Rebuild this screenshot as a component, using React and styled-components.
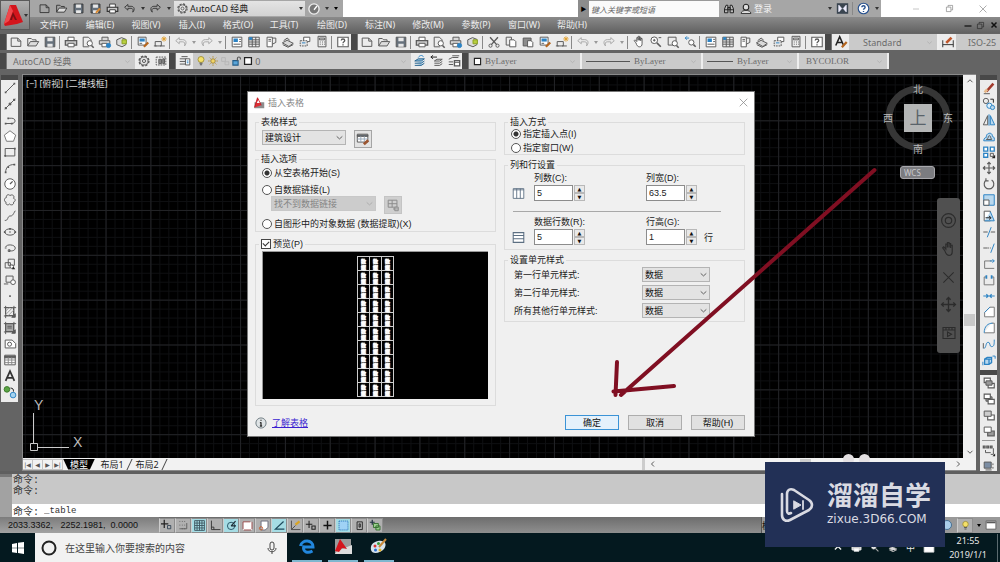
import React from 'react'
import styled, { createGlobalStyle } from 'styled-components';

const GlobalStyle = createGlobalStyle`
 * {
  box-sizing: border-box;
 }
 body {
  margin: 0;
  overflow: hidden;
  background: #646464;
  font-family: "Noto Sans", "Noto Sans CJK SC", sans-serif;
  font-size: 9px;
 }
 button, input, select {
  font: inherit;
  color: inherit;
  margin: 0;
  padding: 0;
  border: none;
  border-radius: 0;
  background: none;
 }
`;

/* ---------- icons ---------- */

const D = '#5a5a5a';
const B = '#2c83c4';
const LB = '#b9d8ee';

const glyphs = {
  new: <path d="M2.5 3.500h7.500l3.500 3.500v6h-11zM10 3.500v3.500h3.500" />,
  open: <><path d="M2 12.500V4h4l1.500 1.500h4V7" /><path d="M2 12.500 5 7.500h9.500L11.500 12.500z" fill="#ddd" /></>,
  save: <><path d="M2.500 2.500h11v11h-11z" fill="#66717c" /><path d="M5 3h6v4H5zM5 10h6v3.500H5z" fill="#e8e8e8" stroke="none" /></>,
  saveas: <><path d="M2.500 2.500h11v11h-11z" fill="#66717c" /><path d="M5 3h6v4H5zM5 10h6v3.500H5z" fill="#e8e8e8" stroke="none" /><path d="M8.500 13.500 13.500 8" stroke="#d98b33" strokeWidth="2.400" /></>,
  print: <><path d="M4.500 6V2.500h7V6" fill="#fff" /><path d="M1.500 6.500h13v5h-13z" fill="#c9c9c9" strokeWidth="1.400" /><path d="M4.500 9.500h7v4h-7z" fill="#fff" /></>,
  preview: <><path d="M9 13.500H2.500v-11h6l3 3V7" /><circle cx="10" cy="9.500" r="3" fill="#fff" /><path d="m12 12 2.500 2.500" strokeWidth="1.800" /></>,
  publish: <><path d="M4.500 6V2.500h7V6M1.500 6.500h12v4h-12z" fill="#d8d8d8" /><path d="M4.500 9.500h6v4h-6z" fill="#fff" /><circle cx="12" cy="12" r="2.400" fill={B} stroke={B} /></>,
  box3d: <><path d="M2 5.500 7.500 3l5 2v6L8 13.500 2 11z" fill="#dcdcdc" /><path d="M8 5.500h5v4.500H8z" fill="#b8cf3e" stroke="#8aa022" /></>,
  match: <><path d="M2.500 2.500h9v9h-9z" fill="#fff" /><path d="M4 4h6v3.500H4z" fill={B} stroke="none" /><path d="M9 13.500 14 8.500" stroke="#b5651d" strokeWidth="2.600" /><path d="M4 9.500h3" /></>,
  blockedit: <><path d="M2.500 7.500h7v5h-7zM1 12.500h3M8 12.500h5.500" /><path d="M12.500 1.500v6M9.500 4.500h6M10.500 2.500l4 4M14.500 2.500l-4 4" stroke="#e0a030" /></>,
  undo: <path d="M6 3 2 6.500 6 10V7.800h4c2 0 3 1.500 2 4.700 3-3 2-7.200-2-7.200H6z" />,
  redo: <path d="m10 3 4 3.500-4 3.500V7.800H6c-2 0-3 1.500-2 4.700C1 9.500 2 5.300 6 5.300h4z" />,
  cut: <><path d="M3.500 2.500 11 11M12.500 2.500 5 11" strokeWidth="1.600" /><circle cx="4" cy="12.200" r="1.800" /><circle cx="12" cy="12.200" r="1.800" /></>,
  copy: <><path d="M2.500 2.500h6v9h-6z" /><path d="M6.500 5.500h5l2 2v6h-7z" fill="#fff" /></>,
  paste: <><path d="M2.500 3.500h9v9h-9z" fill="#8c8c8c" /><path d="M7.500 6.500h4l2 2v5h-6z" fill="#fff" /></>,
  hand: <path d="M4.500 9 2.500 6.500l1-1 2 2V3h1.500v3-4.500h1.500V6 2.500H10V6.500 4h1.500v6c0 2-1 3.500-3 3.500s-3-1.500-4-4.500z" fill="#fff" />,
  handdark: <path d="M4.500 9 2.500 6.500l1-1 2 2V3h1.500v3-4.500h1.500V6 2.500H10V6.500 4h1.500v6c0 2-1 3.500-3 3.500s-3-1.500-4-4.500z" />,
  zoomrt: <><circle cx="6" cy="6" r="3.800" fill="#fff" /><path d="m9 9 4.500 4.500" strokeWidth="1.800" /><path d="M4.500 6h3M6 4.500v3M11 3h3" /></>,
  zoomwin: <><path d="M2.500 2.500h9v9h-9z" /><circle cx="10" cy="9.500" r="3" fill="#fff" /><path d="m12 12 2.500 2.500" strokeWidth="1.800" /></>,
  zoomprev: <><circle cx="9.500" cy="8.500" r="3" fill="#fff" /><path d="m12 11 2.500 2.500" strokeWidth="1.800" /><path d="M7 3.500H2.500m2-2-2 2 2 2" stroke={B} /></>,
  props: <><path d="M2.500 2.500h11v11h-11z" fill="#fff" /><path d="M4 4h5v4H4z" fill={B} stroke="none" /><path d="M10.500 5h2M4 10.500h8M10.500 7.500h2" /></>,
  design: <><path d="M2 2.500h12v11H2z" fill="#eee" /><path d="M2 5.500h12M2 8h12M2 10.500h12M6 2.500v11M10 2.500v11" /><path d="M3 3h2.500v2H3z" fill={B} stroke={B} /></>,
  palette: <><path d="M3.500 2.500h6v11h-6z" fill="#fff" /><path d="M5 5h3M5 7h3M9.500 3.500h4v5l-4 2" /></>,
  sheets: <path d="M1.500 9 7 6l7 3.500-5 3.500zM3 6.500 7 3.500 10 6M2 11l6 3 6-3" fill="#d8d8d8" />,
  markup: <><path d="M6.500 2.500h7v5h-7z" fill="#fff" /><path d="M2.500 6.500h8v6h-8z" fill="#e6e6e6" strokeDasharray="2 1" /><path d="M4.500 9h4" stroke={B} /></>,
  calc: <><path d="M3.500 1.500h9v12h-9z" fill="#eee" /><path d="M5 3.500h6v2H5z" /><path d="M5.500 8h1M8 8h1M10.500 8h1M5.500 10.500h1M8 10.500h1M10.500 10.500h1" /></>,
  help: <><path d="M2 2.500h12v11H2z" fill="#fff" strokeWidth="1.200" /><path d="M6 6.300c0-2.300 4-2.300 4 0 0 1.500-2 1.400-2 3M8 10.500v1.400" strokeWidth="1.500" /></>,
  gear: <><circle cx="8" cy="8" r="5.600" strokeWidth="1.600" strokeDasharray="2.600 1.800" /><circle cx="8" cy="8" r="4.600" fill="#e4e4e4" /><circle cx="8" cy="8" r="1.800" /></>,
  wsave: <><path d="M2.500 3.500h11v9h-11z" strokeDasharray="2 1" /><path d="M5.500 6h3v5h-3zM10 5.500h2v5.500h-2z" fill="#888" /></>,
  layers: <><path d="M2 5.500h8M2 8.500h8M2 11.500h8M4 3h7" stroke={D} /><path d="M8.500 5.500h5v7h-5z" fill="#fff" /><path d="M10 8h2M10 10h2" stroke={B} /></>,
  bulb: <><circle cx="8" cy="6" r="4" fill="#f4e06a" stroke="#9a8a30" /><path d="M6 11h4M6.500 13h3" strokeWidth="1.600" /></>,
  sun: <><circle cx="8" cy="8" r="3" fill="#f0d468" stroke="#9a7d2c" /><path d="M8 1.500v2M8 12.500v2M1.500 8h2M12.500 8h2M3.500 3.500l1.300 1.300M11.200 11.200l1.300 1.300M12.500 3.500l-1.300 1.300M3.500 12.500l1.300-1.300" stroke="#b08a2c" /></>,
  freeze: <path d="M3.500 3.500h5v5h-5zM8 9h5v4H8z" stroke="#b4b4b4" />,
  lock: <><path d="M2.500 7.500h7v6h-7z" fill="#5aa5d8" stroke="#235c88" strokeWidth="1.400" /><path d="M8.500 7.500v-3c0-2.500 4-2.500 4 0V6" strokeWidth="1.500" /></>,
  square: <path d="M2.500 2.500h11v11h-11z" fill="#fff" strokeWidth="2" />,
  layerset: <><path d="m2 8 4-2.500h7L9.500 8zM2 10.500 9.500 10.500 13 8M2 13h7.500L13 10.500" fill="#8fc0e2" stroke="#29648f" /><path d="M6 4c2-3 5-3 6-.500" stroke={B} /></>,
  layerprev: <><path d="m5 8 3-2h6l-3 2zM5 10.500h6l3-2M5 13h6l3-2" /><path d="M1 3.500h7M3.500 1.500l-2.500 2 2.500 2" stroke="#222" /></>,
  layerstate: <><path d="m2 6 4-2h7M2 9h5M2 12h5M6 2h8" /><path d="M8.500 7.500h6v6h-6z" fill="#fff" strokeWidth="1.500" /><path d="M9 9.500h5" /></>,
  textstyle: <><path d="M2 12 6.500 2 11 12M4 8.500h5" stroke="#222" strokeWidth="1.800" /><path d="m9 14 5.500-6" stroke="#b5651d" strokeWidth="2.600" /></>,
  dimstyle: <><path d="M2 6v8M14 6v8M2 11h12" stroke="#333" /><path d="m6 9 6-6" stroke="#c0562a" strokeWidth="3" /></>,
  line: <><path d="M3 13 13 3" /><path d="M2 12h2v2H2zM12 2h2v2h-2z" fill={D} stroke="none" /></>,
  xline: <><path d="M2 14 14 2" /><path d="M7 7h2v2H7zM2.500 12h1.500v1.500H2.500zM12 2.500h1.500V4H12z" fill={D} /></>,
  pline: <><path d="M3 12h7c5 0 5-6 0-6H7" /><path d="M2 11h2v2H2zM9 11h2v2H9zM5 5h2v2H5z" fill={D} stroke="none" /></>,
  polygon: <path d="m8 2 6.500 5-2.500 7H4L1.500 7z" fill="#fff" stroke="#777" />,
  rect: <><path d="M2.500 4h11v8.500h-11z" fill="#eee" /><path d="M1.500 11.500h2v2h-2zM12.500 3h2v2h-2z" fill={D} stroke="none" /></>,
  arc: <><path d="M3 13C3 7 7 4 13 4" /><path d="M2 12h2v2H2zM5 6h2v2H5zM12 3h2v2h-2z" fill={D} stroke="none" /></>,
  circle: <><circle cx="8" cy="8" r="6" fill="#fff" /><path d="m8 8 3-3" strokeWidth="1.500" /></>,
  wheel: <><circle cx="8" cy="8" r="6.500" /><circle cx="8" cy="8" r="3" /></>,
  cloud: <path d="M4 5c-1-3 3-4 4-2 2-2 6 0 4 3 3 1 2 4 0 4.500 1 3-3 4-4.500 2-1.500 2-5 1-4-2-3-1-2-5 .500-5.500z" />,
  spline: <path d="M2 13C6 14 5 8 8 8s3-1 6-6" />,
  ellipse: <><ellipse cx="8" cy="8" rx="6" ry="3.600" /><path d="M1 7h2v2H1zM13 7h2v2h-2zM7 3.500h2v2H7zM7 7.300h2v1.400H7z" fill={D} stroke="none" /></>,
  earc: <path d="M3 7c1-4 11-3 11 1 0 3-4 4-7 3M2 8h2M6 10h2v2H6z" />,
  insert: <><path d="M6 2.500h7v7H6zM2.500 6.500h6v6h-6z" fill="#eee" /><circle cx="10" cy="11" r="2" fill="#fff" /><path d="m12 11 2 3h-4z" fill="#222" stroke="none" /></>,
  block: <><path d="M3.500 3.500h8v7h-8z" /><circle cx="11.500" cy="10.500" r="2.700" fill="#fff" /><path d="M1 12.500h5" /></>,
  point: <path d="M7 7h2v2H7z" fill="#666" stroke="none" />,
  hatch: <><path d="M3 3h9v9H3zM1 3h14M1 12.500h12M3 1v14M12.500 1v10" /><path d="m3 7 4-4M3 11l8-8M6 12l6-6" stroke="#999" /><path d="m10 14 4-4v4z" fill={D} /></>,
  gradient: <><path d="M3 3h9v9H3z" fill="#aaa" /><path d="M1 3h14M1 12.500h12M3 1v14M12.500 1v10M5 6h5M5 8h5" /><path d="m10 14 4-4v4z" fill={D} /></>,
  region: <><path d="M2.500 3.500h8l4 4v5h-12z" fill="#fff" /><circle cx="7.500" cy="8.200" r="2.300" /></>,
  film: <path d="M2 2.500h12v11H2zM2 5h12M5 2.500V5M8 2.500V5M11 2.500V5M6.500 7l4 2.300-4 2.300z" />,
  table: <><path d="M2 2.500h12v11H2z" fill="#fff" /><path d="M2 3.500h12v2H2z" fill={D} /><path d="M2 8h12M2 11h12M6 5v8.500M10 5v8.500" stroke="#888" /></>,
  mtext: <path d="M3 13.500 8 2.500l5 11M5 10h6" stroke="#333" strokeWidth="2" />,
  addsel: <><circle cx="4.500" cy="5" r="3.200" fill="#5ba545" stroke="#3c7a2c" /><circle cx="11.500" cy="11.500" r="3.200" fill="#a5d3f0" stroke={B} /><path d="M8.500 3.500c3 0 3.500 1.500 3.500 4" stroke="#222" /></>,
  erase: <><path d="m5 12 8-9" stroke="#a23a2c" strokeWidth="3" /><path d="m3 13 3-3.500" stroke="#e5b98a" strokeWidth="3" /><path d="M2 14.500h7" /></>,
  copyobj: <><circle cx="4.500" cy="4.500" r="3" /><circle cx="8.500" cy="10" r="3" stroke={B} fill="#dff0fb" /><circle cx="12" cy="12" r="2.400" stroke={B} fill={LB} /><path d="M9.500 2.500h3.500v4" stroke="#222" /></>,
  mirror: <><path d="M6.500 3v10.500h-5z" /><path d="M9.500 3v10.500h5z" fill={LB} stroke={B} /><path d="M8 1.500v13" stroke={B} /></>,
  offset: <><path d="M2 13.500c0-3 2-4 3-4-1-5 7-7 7-1 2 0 2.500 3 2 5z" stroke={B} fill={LB} /><path d="M5 12c1-1 2-1 2-2 0-3 3-3 3 0l1 2z" /></>,
  array: <><path d="M2 2.500h4.500V7H2zM9.500 2.500H14V7H9.500zM2 9.500h4.500V14H2z" stroke={B} fill="#fff" strokeWidth="1.500" /><path d="M9.500 9.500H13V13H9.500z" /><path d="m15 11-4 4h4z" fill="#222" stroke="none" /></>,
  move: <path d="M8 1.500v13M1.500 8h13M6 3.500l2-2 2 2M6 12.500l2 2 2-2M3.500 6l-2 2 2 2M12.500 6l2 2-2 2" strokeWidth="1.300" />,
  rotate: <path d="M5 3.500A5.500 5.500 0 1 0 11 3.500M4.500 1.500v3h3" strokeWidth="1.300" />,
  scale: <><path d="M2 2h12v12H2z" fill={LB} stroke={B} /><path d="M2 8h6v6H2z" fill="#fff" stroke={D} /></>,
  stretch: <><path d="M2.500 2.500h7v11h-7z" fill="#fff" /><path d="M9.500 3 14 13.500H3" stroke={B} fill={LB} /><path d="M4 10h6M8 8l2.500 2L8 12" stroke="#222" /></>,
  trim: <><path d="M1.500 8h5M10 8h5" /><path d="M6 14 10.500 2.500" stroke={B} /></>,
  extend: <><path d="M1.500 8h5" /><path d="M7 8h3" strokeDasharray="1 1" /><path d="M10 13.500 14 3" stroke={B} /></>,
  breakpt: <><path d="M11 4.500H3v8.500h11" stroke="#777" /><path d="M9 4.500h5M12 2.500l2 2-2 2" stroke={B} /></>,
  breakobj: <><path d="M5 4.500H2.500v9h11v-9H11" stroke="#777" /><path d="M5 2.500v4M11 2.500v4" stroke={B} strokeWidth="2" /></>,
  join: <path d="M1.500 8h13M5 6l2 2-2 2M11 6 9 8l2 2" stroke={B} strokeWidth="1.300" />,
  chamfer: <><path d="M3 13.500h11v-11H9L3 8.500z" stroke="#777" fill="#fff" /><path d="M9 2.500 3 8.500" stroke={B} /></>,
  fillet: <><path d="M2.500 13.500h11.500v-11h-3" stroke="#777" fill="#fff" /><path d="M2.500 13.500C2.500 6 7 2.500 12 2.500" stroke={B} /></>,
  blend: <><path d="M2 13c3 0 2-7 5-7s1 5 4 5 3-3 3-8" stroke={B} /><path d="M1.500 7v6" /></>,
  explode: <><path d="m3 7 3-2h5v6l-3 2H3zM8 7h3M8 7v6M3 7h5" stroke={B} fill={LB} strokeWidth="1.400" /><path d="M12 3.500h3v3M1 10v4" stroke={B} /></>,
  front: <><path d="M2.500 2.500h7v5h-7zM7 8.500h7v5H7z" fill="#fff" strokeWidth="1.300" /><path d="M4.500 5.500h7v5h-7z" fill="#999" /></>,
  back: <><path d="M4.500 5.500h7v5h-7z" fill="#999" /><path d="M2.500 2.500h7v5h-7zM7 8.500h7v5H7z" fill="#fff" strokeWidth="1.300" /></>,
  above: <><path d="M6.500 8h7.500v5.500H6.500z" fill="#fff" strokeWidth="1.300" /><path d="M2.500 3.500h8v6h-8z" fill="#ccc" /></>,
  under: <><path d="M6.500 8h7.500v5.500H6.500z" fill="#999" strokeWidth="1.300" /><path d="M2.500 3.500h8v6h-8z" fill="#fff" /></>,
  textfront: <><path d="M1.500 3.500h2v2h-2zM5.500 3.500h2v2h-2zM9.500 3.500h2v2h-2z" strokeWidth="1.400" /><path d="M4 8v3h6M13 6v7h-3" /><path d="m15 12-3 3h3z" fill="#222" stroke="none" /></>,
  hatchback: <><path d="M2.500 3.500h8v7h-8z" fill="#7b8da3" /><path d="M12.500 5v2M12.500 9v2M4 12.500h7" /></>,
  infer: <><path d="M4 1v10M0 6h9" stroke="#222" strokeWidth="1.500" /><path d="M8 8h4v4H8z" stroke="#345" /></>,
  snap: <><path d="M3 3h9M3 7.500h9M3 12h9" strokeDasharray="1 2" /><path d="M12 5v7H4" /></>,
  grid: <path d="M2 2h12v12H2zM5 2v12M8 2v12M11 2v12M2 5h12M2 8h12M2 11h12" stroke="#3b5560" />,
  ortho: <path d="M3 2v11h11M6 13v-3H3" stroke="#333" />,
  polar: <><circle cx="7.500" cy="8.500" r="4.500" stroke="#1d4a5c" /><path d="M7.500 8.500 13 2.500M7.500 8.500h6" stroke="#1d2a33" strokeWidth="1.400" /></>,
  osnap: <path d="M2.500 3.500h11v10h-11z" fill="#fff" stroke="#944" strokeDasharray="9 2" />,
  osnap3: <><path d="M5 2.500h8.500v8L10 13.500H5z" fill="#fff" stroke="#667" /><circle cx="5" cy="11.500" r="2" stroke="#c65a2a" /></>,
  otrack: <path d="M13 3 3 12.500h11" stroke="#1d4a5c" strokeWidth="1.500" />,
  ducs: <><path d="M3 2v11h11M3 13l5-5" stroke="#444" /><path d="m8 7 5-4" stroke="#d9a423" strokeWidth="2.600" /></>,
  dyn: <path d="M5 2v9M1 6.500h8M8.500 8.500h4v4h-4z" stroke="#222" strokeWidth="1.300" />,
  lwt: <path d="M8 2v11M3 8h10" stroke="#111" strokeWidth="1.800" />,
  tpy: <path d="M2.500 2.500h11v11h-11z" fill="#9fd2f5" stroke="#2473b8" strokeDasharray="1.500 1" />,
  qp: <path d="M5 3.500h6.500v9.500H5zM7.500 6h1.500v4H7.500z" stroke="#222" />,
  sc: <><path d="M4 1v6M1 4h6" stroke="#234" strokeWidth="1.500" /><path d="M5.500 5.500h6v5h-6zM8.500 8.500h5v5h-5z" fill="#9bd08f" stroke="#2e6b2a" /></>,
  globe: <circle cx="8" cy="8" r="6" fill="#a9cdea" stroke="#33628c" />,
  window: <><path d="M1.500 2.500h13v11h-13z" fill="#fff" /><path d="M2 4.500h12" strokeWidth="2.400" /></>,
  compass: <><circle cx="8" cy="8" r="6.800" stroke="#eee" fill="#777" strokeWidth="1.800" /><path d="M8 9 12 4" stroke="#fff" strokeWidth="1.800" /></>,
  binoc: <path d="M2 13V8l2-5h2.500v10zM14 13V8l-2-5H9.500v10zM6.500 6h3v3h-3zM2 9h4.500M9.500 9H14" strokeWidth="1.300" stroke="#222" fill="#bbb" />,
  user: <><circle cx="8" cy="5.500" r="3.700" fill="#ddd" stroke="#222" strokeWidth="1.400" /><path d="M1.500 14c0-3 3-4 6.500-4s6.500 1 6.500 4z" fill="#ddd" stroke="#222" /></>,
  exchange: <><path d="M1 1.500h14v13H1z" fill="#3a4550" stroke="none" /><path d="M3.500 4 7 8l-3.500 4zM12.500 4 9 8l3.500 4z" fill="#eef" stroke="#eef" /></>,
  helpcircle: <><circle cx="8" cy="8" r="6.500" fill="#fff" stroke="#27518f" strokeWidth="1.400" /><path d="M6 6.500c0-2.500 4-2.500 4 0 0 1.500-2 1.400-2 3M8 11v1.300" stroke="#27518f" strokeWidth="1.700" /></>,
  min: <path d="M2 8h12" />,
  minbold: <path d="M1 10h14" strokeWidth="3" />,
  restore: <path d="M2.500 5.500h8v8h-8zM5.500 5V2.500h8v8H11" />,
  close: <path d="m2.500 2.500 11 11M13.500 2.500l-11 11" />,
  closebold: <path d="m3 3 10 10M13 3 3 13" strokeWidth="3" />,
  chevron: <path d="m3 6 5 4.500L13 6" strokeWidth="1.600" />,
  left: <path d="m10 3-5 5 5 5" strokeWidth="2" />,
  right: <path d="m6 3 5 5-5 5" strokeWidth="2" />,
  up: <path d="m3 10.500 5-5 5 5" strokeWidth="2" />,
  down: <path d="m3 5.500 5 5 5-5" strokeWidth="2" />,
  tablestyle: <><path d="M1.500 2.500h12v9h-12z" fill="#fff" /><path d="M1.500 3.500h12v1.500h-12z" fill="#678" /><path d="M1.500 8h12M5.500 5v6.500M9.500 5v6.500" stroke="#9ab" /><path d="m9 14 5-4.500" stroke="#9c5530" strokeWidth="3.200" /></>,
  datalink: <><path d="M2.500 2.500h10v8h-10zM2.500 6.500h10M7 2.500v8" stroke="#8a8a8a" /><path d="M8 12.500h6M10 10.500h4v4h-4z" stroke="#8a8a8a" fill="#ddd" /></>,
  cols: <path d="M1.500 2h13v12h-13zM1.500 3.500h13M5.800 2v12M10.200 2v12" stroke="#5c6f82" fill="#fff" />,
  rows: <path d="M1.500 2h13v12h-13zM1.500 5.500h13M1.500 9.500h13" stroke="#5c6f82" fill="#fff" strokeWidth="1.300" />,
  info: <><circle cx="8" cy="8" r="6.800" fill="#dfe4e6" stroke="#66747b" strokeWidth="1.200" /><path d="M8 7v5M6.500 7.500H8M6.500 12h3M8 3.500v1.600" stroke="#333" strokeWidth="1.800" /></>,
  dlg: <><path d="M2 7h13v8H2z" fill="#8d8d8d" stroke="none" /><path d="m2 14 4-13 5 10" fill="#dd2f35" stroke="#c4141c" /><path d="m5 8 2-4 2 4z" fill="#fff" stroke="none" /></>,
};

const Svg = styled.svg`
 display: block;
 flex: none;
 width: ${({$size}) => $size}px;
 height: ${({$size}) => $size}px;
 fill: none;
 stroke: ${({$color}) => $color};
 stroke-width: 1.1;
 opacity: ${({$dim}) => $dim ? 0.45 : 1};
`;

const Icon = ({ name, size = 14, color = D, dim }) => (
  <Svg viewBox="0 0 16 16" $size={size} $color={color} $dim={dim} aria-hidden="true">{glyphs[name]}</Svg>
);

const Caret = styled.i`
 flex: none;
 width: 0;
 height: 0;
 border: 2px solid transparent;
 border-top: 3px solid ${({$color}) => $color || '#333'};
 border-bottom: none;
`;

/* ---------- shell ---------- */

const Window = styled.div`
 position: relative;
 display: flex;
 flex-direction: column;
 height: 100vh;
`;

const Header = styled.header`
 display: flex;
 height: 33px;
 flex: none;
`;

const AppButton = styled.button`
 display: flex;
 align-items: center;
 gap: 1px;
 width: 30px;
 height: 30px;
 padding-left: 2px;
 border: 1px solid #5a5a5a;
 background: linear-gradient(#b0b0b0, #7e7e7e);
`;

const HeaderRows = styled.div`
 flex: 1;
 min-width: 0;
 display: flex;
 flex-direction: column;
`;

const TitleBar = styled.div`
 display: flex;
 height: 17px;
 background: #fff;
`;

const QuickAccess = styled.div`
 display: flex;
 align-items: center;
 width: 313px;
 padding-left: 6px;
 background: #a6a6a6;
`;

const ToolButton = styled.button`
 display: flex;
 align-items: center;
 justify-content: center;
 flex: none;
 width: 17px;
 height: 16px;
`;

const ArrowButton = styled(ToolButton)`
 width: 9px;
`;

const WorkspaceBox = styled.button`
 display: flex;
 align-items: center;
 gap: 1px;
 width: 131px;
 height: 15px;
 padding: 0 2px;
 margin-left: 1px;
 color: #222;
 background: linear-gradient(#e4e4e4, #d2d2d2);
 span {
  flex: 1;
  text-align: left;
 }
`;

const TitleGap = styled.div`
 flex: 1;
`;

const SearchToggle = styled.button`
 width: 11px;
 background: #8c8c8c;
 color: #000;
 font-size: 6px;
`;

const TitleSearch = styled.input`
 width: 130px;
 padding: 0 2px;
 background: #fafafa;
 border-top: 1px solid #999;
 font-size: 8px;
 font-style: italic;
 &::placeholder {
  color: #666;
  opacity: 1;
 }
`;

const Account = styled.div`
 display: flex;
 align-items: center;
 width: 162px;
 padding-left: 1px;
 background: #a6a6a6;
 color: #f5f5f5;
`;

const AccountName = styled.span`
 flex: 1;
`;

const WindowControls = styled.div`
 display: flex;
 align-items: center;
 justify-content: space-around;
 width: 119px;
 padding: 0 0 0 18px;
`;

const MenuBar = styled.nav`
 display: flex;
 align-items: center;
 height: 16px;
 padding-left: 1px;
 background: linear-gradient(#8a8a8a, #616161);
`;

const MenuItem = styled.button`
 width: 46px;
 flex: none;
 color: #ececec;
 line-height: 12px;
 white-space: nowrap;
 margin-right: ${({$extra}) => $extra ? 2 : 0}px;
`;

const MdiControls = styled.div`
 display: flex;
 margin-left: auto;
 button {
  width: 13px;
 }
`;

const Row = styled.div`
 display: flex;
 flex: none;
 align-items: flex-start;
 height: ${({$h}) => $h}px;
 padding-top: ${({$top}) => $top}px;
`;

const Grip = styled.div`
 flex: none;
 width: ${({$w}) => $w || 7}px;
 height: 16px;
 background: #484848;
 border-right: 1px solid #777;
`;

const Bar = styled.div`
 display: flex;
 align-items: center;
 flex: none;
 height: 16px;
 background: #ececec;
`;

const Sep = styled.span`
 flex: none;
 width: 1px;
 height: 13px;
 margin: 0 2px 0 1px;
 background: #888;
`;

const Combo = styled.button`
 display: flex;
 align-items: center;
 flex: none;
 gap: ${({$gap}) => $gap || 0}px;
 width: ${({$w}) => $w}px;
 height: 16px;
 padding: 0 4px 0 ${({$pad}) => $pad || 4}px;
 border-right: ${({$edge}) => $edge ? '2px solid #eee' : 'none'};
 background: #cacaca;
 color: #6a6a6a;
 font-family: ${({$serif}) => $serif ? '"Liberation Serif", serif' : 'inherit'};
 span {
  flex: 1;
  text-align: left;
  white-space: nowrap;
 }
`;

const LineSample = styled.hr`
 width: ${({$w}) => $w}px;
 margin: 0 4px 0 0;
 border: none;
 border-top: 1px solid #555;
`;

const Workspace = styled.main`
 display: flex;
 flex: 1;
 min-height: 0;
 border-bottom: 3px solid #5f5f5f;
`;

const SideBar = styled.aside`
 display: flex;
 flex-direction: column;
 flex: none;
 align-items: flex-start;
 width: ${({$w}) => $w}px;
 padding: 1px 1px 0 ${({$pad}) => $pad}px;
 overflow: hidden;
`;

const SideGroup = styled.div`
 display: flex;
 flex-direction: column;
 align-items: center;
 width: 17px;
 flex: none;
 padding-bottom: 2px;
 background: #ececec;
 border-top: 5px solid #484848;
`;

const SideSep = styled.span`
 width: 13px;
 height: 1px;
 margin: 1px 0;
 background: #999;
`;

const DrawingColumn = styled.div`
 display: flex;
 flex-direction: column;
 flex: 1;
 min-width: 0;
 border: 1px solid #8a8a8a;
 border-right: none;
`;

const DrawingRow = styled.div`
 display: flex;
 flex: 1;
 min-height: 0;
`;

const Canvas = styled.section`
 position: relative;
 flex: 1;
 min-width: 0;
 background: #000;
`;

const GridSvg = styled.svg`
 display: block;
 width: 100%;
 height: 100%;
`;

const ViewLabel = styled.span`
 position: absolute;
 left: 3px;
 top: 3px;
 color: #d8d8d8;
 line-height: 12px;
`;

const Ucs = styled.svg`
 position: absolute;
 left: 4px;
 bottom: 1px;
 width: 60px;
 height: 60px;
`;

const Compass = styled.svg`
 position: absolute;
 right: 8px;
 top: 5px;
 width: 74px;
 height: 78px;
`;

const WcsButton = styled.button`
 position: absolute;
 right: 28px;
 top: 91px;
 width: 35px;
 height: 13px;
 padding-left: 3px;
 border: 1px solid #a8a8ac;
 border-radius: 3px;
 background: #7b7c80;
 color: #c9c9cc;
 text-align: left;
 font-size: 8px;
 line-height: 10px;
`;

const NavBar = styled.div`
 position: absolute;
 right: 3px;
 top: 123px;
 display: flex;
 flex-direction: column;
 align-items: center;
 justify-content: space-between;
 width: 23px;
 height: 155px;
 padding: 14px 0 12px;
 border-radius: 3px;
 background: #505050;
`;

const VScroll = styled.div`
 display: flex;
 flex-direction: column;
 align-items: center;
 justify-content: space-between;
 width: 13px;
 padding: 2px 0;
 background: #f0f0f0;
`;

const VThumb = styled.span`
 width: 11px;
 height: 12px;
 margin-top: 106px;
 background: #c9c9c9;
`;

const LayoutBar = styled.div`
 display: flex;
 align-items: center;
 flex: none;
 height: 12px;
 background: #f2f2f2;
`;

const LayoutNav = styled.button`
 display: flex;
 justify-content: center;
 align-items: center;
 width: 10px;
 height: 11px;
 border: 1px solid #c4c4c4;
 border-left: none;
 font-family: "DejaVu Sans", sans-serif;
 font-size: 6px;
 color: #555;
`;

const LayoutTab = styled.button`
 display: flex;
 align-items: center;
 height: 11px;
 width: ${({$active}) => $active ? 32 : 34}px;
 justify-content: center;
 line-height: 11px;
 color: ${({$active}) => $active ? '#fff' : '#222'};
 background: ${({$active}) => $active ? '#000' : 'transparent'};
 clip-path: ${({$active}) => $active ? 'polygon(0 0, 100% 0, 84% 100%, 16% 100%)' : 'none'};
`;

const Slash = styled.span`
 width: 1px;
 height: 11px;
 background: #444;
 transform: skewX(-25deg);
`;

const HScroll = styled.div`
 display: flex;
 align-items: center;
 justify-content: space-between;
 width: 35%;
 height: 12px;
 margin-left: auto;
 padding: 0 14px 0 4px;
 border-left: 3px solid #ccc;
`;

const HThumb = styled.span`
 width: 11px;
 height: 10px;
 background: #cdcdcd;
`;

const Blob = styled.span`
 position: absolute;
 right: ${({$r}) => $r}px;
 bottom: -7px;
 width: 11px;
 height: 11px;
 border-radius: 50%;
 background: #e4e0e2;
`;

/* ---------- dialog ---------- */

const Dialog = styled.section`
 position: absolute;
 left: 224px;
 top: 16px;
 width: 508px;
 background: #f0f0f0;
 color: #222;
 border: 1px solid #777;
 font-family: "Liberation Sans", "Noto Sans CJK SC", sans-serif;
`;

const DialogTitle = styled.div`
 display: flex;
 align-items: center;
 gap: 3px;
 height: 21px;
 padding: 0 5px;
 background: #fff;
 color: #888;
 h1 {
  flex: 1;
  margin: 0;
  font-size: 9px;
  font-weight: 400;
 }
`;

const DialogBody = styled.div`
 display: grid;
 grid-template-columns: 1fr 1fr;
 gap: 8px;
 padding: 3px 9px 0 7px;
`;

const DialogColumn = styled.div`
 display: flex;
 flex-direction: column;
 gap: ${({$gap}) => $gap}px;
`;

const Group = styled.fieldset`
 display: flex;
 flex-direction: column;
 gap: ${({$gap}) => $gap || 0}px;
 min-width: 0;
 margin: 0;
 padding: ${({$pad}) => $pad};
 border: 1px solid #dcdcdc;
`;

const Legend = styled.legend`
 display: flex;
 align-items: center;
 height: 12px;
 margin-left: -3px;
 padding: 0 2px;
 line-height: 12px;
`;

const Inline = styled.div`
 display: flex;
 align-items: flex-start;
 gap: 8px;
 margin-left: ${({$indent}) => $indent || 0}px;
`;

const Choice = styled.label`
 display: flex;
 align-items: center;
 gap: 2px;
 height: 12px;
 line-height: 12px;
 white-space: nowrap;
`;

const Radio = styled.input`
 appearance: none;
 flex: none;
 width: 10px;
 height: 10px;
 border: 1px solid #555;
 border-radius: 50%;
 background: #fff;
 &:checked {
  background: radial-gradient(#333 0 2px, #fff 3px);
 }
`;

const Check = styled.input`
 appearance: none;
 flex: none;
 width: 10px;
 height: 10px;
 border: 1px solid #444;
 background: #fff;
 &:checked::after {
  content: "";
  display: block;
  width: 5px;
  height: 3px;
  margin: 1px;
  border: solid #333;
  border-width: 0 0 1px 1px;
  transform: rotate(-45deg);
 }
`;

const SelectWrap = styled.span`
 display: grid;
 flex: none;
 align-items: center;
 width: ${({$w}) => $w}px;
 height: 15px;
 color: ${({$off}) => $off ? '#858585' : '#111'};
 select {
  grid-area: 1 / 1;
  appearance: none;
  height: 15px;
  padding: 0 2px;
  border: 1px solid ${({$off}) => $off ? '#c8c8c8' : '#b4b4b4'};
  background: ${({$off}) => $off ? '#cccccc' : '#e3e3e3'};
  opacity: 1;
 }
 svg {
  grid-area: 1 / 1;
  justify-self: end;
  margin-right: 2px;
  pointer-events: none;
 }
`;

const Select = ({ id, width, value, off, label }) => (
  <SelectWrap $w={width} $off={off}>
    <select id={id} aria-label={label} disabled={off}><option>{value}</option></select>
    <Icon name="chevron" size={9} color={off ? '#aaa' : '#555'} />
  </SelectWrap>
);

const SquareButton = styled.button`
 display: flex;
 align-items: center;
 justify-content: center;
 width: 18px;
 height: 18px;
 border: 1px solid ${({disabled}) => disabled ? '#c4c4c4' : '#a5a5a5'};
 background: ${({disabled}) => disabled ? '#cfcfcf' : '#e3e3e3'};
`;

const SourceGroup = styled(Group)`
 margin: 2px 0 6px;
 > label {
  margin-top: 4px;
 }
`;

const Preview = styled.div`
 display: flex;
 justify-content: center;
 height: 148px;
 padding-top: 4px;
 background: #000;
 border: 1px solid #999;
 border-width: 1px 0 0 1px;
`;

const PreviewTable = styled.table`
 height: 141px;
 border-collapse: collapse;
 color: #fff;
 td {
  width: 12px;
  height: 14px;
  padding: 0;
  border: 1px solid #ccc;
  font-size: 5px;
  font-weight: 900;
  line-height: 6px;
  text-align: center;
  text-shadow: 0 0 1px #fff, 0 0 1px #fff;
 }
 span {
  display: block;
 }
`;

const SizeGrid = styled.div`
 display: grid;
 grid-template-columns: 22px 112px 1fr;
 row-gap: 1px;
 align-items: center;
 padding-left: 1px;
 label {
  height: 12px;
  line-height: 12px;
 }
`;

const Spin = styled.span`
 display: flex;
 align-items: center;
 gap: 1px;
`;

const SpinInput = styled.input`
 width: 39px;
 height: 16px;
 padding: 0 2px;
 border: 1px solid #8c8c8c;
 background: #fff;
`;

const SpinButtons = styled.span`
 display: flex;
 flex-direction: column;
 width: 11px;
 margin-right: 6px;
 button {
  height: 8px;
  border: 1px solid #b8b8b8;
  background: #e9e9e9;
  font-family: "DejaVu Sans", sans-serif;
  font-size: 5px;
  line-height: 6px;
  color: #111;
 }
`;

const Spinner = ({ id, value, unit }) => (
  <Spin>
    <SpinInput id={id} defaultValue={value} />
    <SpinButtons>
      <button aria-label="增加">▲</button>
      <button aria-label="减少">▼</button>
    </SpinButtons>
    {unit}
  </Spin>
);

const Rule = styled.hr`
 width: 208px;
 margin: 10px 0 4px 2px;
 border: none;
 border-top: 1px solid #a8a8a8;
`;

const StyleRow = styled.div`
 display: flex;
 align-items: center;
 height: 15px;
 padding-left: 3px;
 label {
  width: 128px;
 }
`;

const DialogFooter = styled.div`
 display: flex;
 align-items: center;
 gap: 9px;
 padding: 9px 9px 6px 7px;
`;

const HelpLink = styled.div`
 display: flex;
 align-items: center;
 flex: 1;
 gap: 5px;
 a {
  color: #3a1fd0;
 }
`;

const DialogButton = styled.button`
 width: 54px;
 height: 15px;
 border: 1px solid ${({$primary}) => $primary ? '#3b93d6' : '#adadad'};
 background: ${({$primary}) => $primary ? '#e5f1fb' : '#e1e1e1'};
 line-height: 12px;
 color: #111;
`;

/* ---------- bottom ---------- */

const CommandArea = styled.section`
 display: flex;
 flex: none;
 height: 43px;
 font-family: "Liberation Mono", "Noto Sans CJK SC", monospace;
 font-size: 10px;
 color: #333;
`;

const CommandGrip = styled.div`
 width: 12px;
 background: #a2a2a2;
 border-top: 3px solid #777;
`;

const CommandBody = styled.div`
 display: flex;
 flex-direction: column;
 flex: 1;
 background: #c8c8c8;
 padding: 1px 0 0 1px;
 p {
  height: 11px;
  margin: 0;
  line-height: 11px;
 }
`;

const CommandLine = styled.div`
 display: flex;
 align-items: center;
 gap: 5px;
 height: 13px;
 margin: auto 0 0 -1px;
 padding-left: 1px;
 background: #fff;
 input {
  flex: 1;
  font-size: 9px;
 }
`;

const StatusBar = styled.footer`
 display: flex;
 align-items: center;
 flex: none;
 height: 16px;
 background: linear-gradient(#6d6d6d, #8f8f8f);
`;

const Coords = styled.span`
 width: 159px;
 padding-left: 8px;
 font-family: "Liberation Sans", sans-serif;
 white-space: pre;
 line-height: 16px;
 color: #111;
 background: linear-gradient(#7c7c7c, #a2a2a2);
`;

const StatusButton = styled.button`
 display: flex;
 align-items: center;
 justify-content: center;
 width: 16px;
 height: 15px;
 border: 1px solid #8d8d8d;
 border-left-color: #ccc;
 background: ${({$on}) => $on ? '#a5dce4' : '#b0b0b0'};
`;

const StatusRight = styled.div`
 display: flex;
 align-items: center;
 justify-content: space-between;
 flex: none;
 width: 239px;
 height: 16px;
 margin-left: auto;
 padding-right: 3px;
 border-left: 1px solid #555;
 color: #111;
 background: #999;
`;

const StatusTools = styled.div`
 display: flex;
 align-items: center;
 gap: 4px;
`;

const TaskBar = styled.footer`
 display: flex;
 flex: none;
 height: 29px;
 background: #04191f;
 color: #e8e8e8;
`;

const StartButton = styled.button`
 display: flex;
 align-items: center;
 justify-content: center;
 width: 35px;
`;

const TaskSearch = styled.label`
 display: flex;
 align-items: center;
 gap: 8px;
 width: 252px;
 padding: 0 9px 0 6px;
 background: #f2f2f2;
 color: #444;
 input {
  flex: 1;
  min-width: 0;
  font-size: 10px;
 }
 input::placeholder {
  color: #444;
  opacity: 1;
 }
`;

const TaskApp = styled.button`
 display: flex;
 align-items: center;
 justify-content: center;
 width: 30px;
 margin-left: ${({$first}) => $first ? 5 : 6}px;
 border-bottom: 2px solid #7fb7cf;
`;

const Tray = styled.div`
 display: flex;
 align-items: center;
 gap: 8px;
 margin-left: auto;
 font-size: 9px;
`;

const Clock = styled.time`
 width: 54px;
 padding-right: 5px;
 margin-left: 1px;
 text-align: center;
 line-height: 14px;
 border-right: 1px solid #5b6a6f;
 margin-right: 2px;
`;

const Watermark = styled.div`
 position: absolute;
 right: 55px;
 bottom: 15px;
 display: flex;
 align-items: center;
 gap: 13px;
 width: 180px;
 height: 85px;
 padding: 0 13px 0 15px;
 background: #223056;
 color: #d9dae2;
`;

const Brand = styled.div`
 font-family: "Noto Sans CJK SC", sans-serif;
 font-size: 26px;
 font-weight: 700;
 line-height: 36px;
 white-space: nowrap;
`;

const Site = styled.div`
 padding-bottom: 8px;
 font-family: "DejaVu Sans", sans-serif;
 font-size: 12px;
 line-height: 14px;
 white-space: nowrap;
`;

const Pointer = styled.svg`
 position: absolute;
 left: 605px;
 top: 160px;
 width: 280px;
 height: 245px;
 fill: none;
 stroke: #800f22;
 stroke-width: 4;
 stroke-linecap: round;
 pointer-events: none;
`;

const menus = ['文件(F)', '编辑(E)', '视图(V)', '插入(I)', '格式(O)', '工具(T)', '绘图(D)', '标注(N)', '修改(M)', '参数(P)', '窗口(W)', '帮助(H)'];
const standardTools = ['new', 'open', 'save', '|', 'print', 'preview', 'publish', 'box3d', '|', 'match', 'blockedit', '|', 'undo', 'v', 'redo', 'v', '|', 'props', 'design', 'palette', 'sheets', 'markup', 'calc', '|', 'help'];
const fullTools = ['new', 'open', 'save', '|', 'print', 'preview', 'publish', 'box3d', '|', 'cut', 'copy', 'paste', 'match', 'blockedit', '|', 'undo', 'v', 'redo', 'v', '|', 'hand', 'zoomrt', 'zoomwin', 'zoomprev', '|', 'props', 'design', 'palette', 'sheets', 'markup', 'calc', '|', 'help'];
const drawTools = ['line', 'xline', 'pline', 'polygon', 'rect', 'arc', 'circle', 'cloud', 'spline', 'ellipse', 'earc', 'insert', 'block', 'point', 'hatch', 'gradient', 'region', 'table', 'mtext', 'addsel'];
const modifyTools = ['erase', 'copyobj', 'mirror', 'offset', 'array', 'move', 'rotate', 'scale', 'stretch', 'trim', 'extend', 'breakpt', 'breakobj', 'join', 'chamfer', 'fillet', 'blend', 'explode'];
const orderTools = ['front', 'back', 'above', 'under', '|', 'textfront', 'hatchback'];
const statusTools = ['infer', 'snap', 'grid', 'ortho', 'polar', 'osnap', 'osnap3', 'otrack', 'ducs', 'dyn', 'lwt', 'tpy', 'qp', 'sc'];
const statusOn = ['grid', 'polar', 'otrack', 'tpy'];
const cellStyles = ['第一行单元样式:', '第二行单元样式:', '所有其他行单元样式:'];

const Tools = ({ items }) => items.map((name, i) => {
  if (name === '|') return <Sep key={i} />
  if (name === 'v') return <ArrowButton key={i} aria-label="more"><Caret $color="#999" /></ArrowButton>
  return (
    <ToolButton key={i} aria-label={name}>
      <Icon name={name} dim={name === 'undo' || name === 'redo'} />
    </ToolButton>
  )
})

const SideTools = ({ items }) => (
  <SideGroup>
    {items.map((name, i) => name === '|'
      ? <SideSep key={i} />
      : <ToolButton key={name} aria-label={name}><Icon name={name} /></ToolButton>
    )}
  </SideGroup>
)

const TitleArea = () => (
  <Header>
    <AppButton aria-label="AutoCAD">
      <svg width="20" height="24" viewBox="0 0 20 24">
        <path d="M1 21 7 2h6l7 17-6 2-12 2z" fill="#d4151c" />
        <path d="M7 2 1 21l5-3 4-10z" fill="#f0484c" />
        <path d="m7 17 3-8 4 8h-2l-2-4-1 4z" fill="#7a1014" />
      </svg>
      <Caret />
    </AppButton>
    <HeaderRows>
      <TitleBar>
        <QuickAccess>
          {['new', 'open', 'save', 'saveas', 'print', 'undo'].map((name) => (
            <ToolButton key={name} aria-label={name}><Icon name={name} size={13} color="#333" /></ToolButton>
          ))}
          <ArrowButton aria-label="undo list"><Caret /></ArrowButton>
          <ToolButton aria-label="redo"><Icon name="redo" size={13} color="#333" /></ToolButton>
          <ArrowButton aria-label="redo list"><Caret /></ArrowButton>
          <WorkspaceBox>
            <Icon name="gear" size={13} />
            <span>AutoCAD 经典</span>
            <Caret />
          </WorkspaceBox>
          <ToolButton aria-label="compass"><Icon name="compass" size={12} /></ToolButton>
          <ArrowButton aria-label="more"><Caret /></ArrowButton>
          <ArrowButton aria-label="customize"><Caret $color="#000" /></ArrowButton>
        </QuickAccess>
        <TitleGap />
        <SearchToggle aria-label="search">▶</SearchToggle>
        <TitleSearch aria-label="search" placeholder="键入关键字或短语" />
        <Account>
          <ToolButton aria-label="find"><Icon name="binoc" size={12} /></ToolButton>
          <ToolButton aria-label="user"><Icon name="user" size={12} /></ToolButton>
          <AccountName>登录</AccountName>
          <ArrowButton aria-label="account"><Caret /></ArrowButton>
          <ToolButton aria-label="exchange"><Icon name="exchange" size={13} /></ToolButton>
          <Sep />
          <ToolButton aria-label="help"><Icon name="helpcircle" size={13} /></ToolButton>
          <ArrowButton aria-label="help list"><Caret /></ArrowButton>
        </Account>
        <WindowControls>
          <ToolButton aria-label="minimize"><Icon name="min" size={8} color="#999" /></ToolButton>
          <ToolButton aria-label="restore"><Icon name="restore" size={9} color="#777" /></ToolButton>
          <ToolButton aria-label="close"><Icon name="close" size={10} color="#888" /></ToolButton>
        </WindowControls>
      </TitleBar>
      <MenuBar>
        {menus.map((m, i) => <MenuItem key={m} $extra={i > 4}>{m}</MenuItem>)}
        <MdiControls>
          <ToolButton aria-label="minimize"><Icon name="minbold" size={8} color="#222" /></ToolButton>
          <ToolButton aria-label="restore"><Icon name="restore" size={9} color="#222" /></ToolButton>
          <ToolButton aria-label="close"><Icon name="closebold" size={8} color="#111" /></ToolButton>
        </MdiControls>
      </MenuBar>
    </HeaderRows>
  </Header>
)

const Toolbars = () => (
  <>
    <Row $h={18} $top={1}>
      <Grip />
      <Bar><Tools items={standardTools} /></Bar>
      <Grip />
      <Bar><Tools items={fullTools} /></Bar>
      <Grip />
      <Bar><Tools items={['textstyle']} /></Bar>
      <Combo $w={90} $pad={14} $edge><span>Standard</span><Icon name="chevron" size={7} color="#aaa" /></Combo>
      <Bar><Tools items={['dimstyle']} /></Bar>
      <Combo $w={50} $pad={12}><span>ISO-25</span></Combo>
    </Row>
    <Row $h={23} $top={2}>
      <Grip />
      <Combo $w={128} $pad={6}><span>AutoCAD 经典</span><Icon name="chevron" size={7} color="#aaa" /></Combo>
      <Bar><Tools items={['gear', 'wsave']} /></Bar>
      <Grip />
      <Bar><Tools items={['layers']} /></Bar>
      <Combo $w={218} $pad={2}>
        <Icon name="bulb" size={12} />
        <Icon name="sun" size={12} />
        <Icon name="freeze" size={12} />
        <Icon name="lock" size={12} />
        <Icon name="square" size={10} color="#222" />
        <span>&nbsp;0</span>
        <Icon name="chevron" size={7} color="#aaa" />
      </Combo>
      <Bar><Tools items={['layerset', 'layerprev', 'layerstate']} /></Bar>
      <Grip />
      <Combo $w={113} $serif $gap={3} $edge><Icon name="square" size={9} color="#222" /><span>ByLayer</span><Icon name="chevron" size={7} color="#aaa" /></Combo>
      <Combo $w={121} $serif $edge><LineSample $w={44} /><span>ByLayer</span><Icon name="chevron" size={7} color="#aaa" /></Combo>
      <Combo $w={96} $serif $edge><LineSample $w={26} /><span>ByLayer</span><Icon name="chevron" size={7} color="#aaa" /></Combo>
      <Combo $w={90} $serif $pad={7} $edge><span>BYCOLOR</span><Icon name="chevron" size={7} color="#aaa" /></Combo>
    </Row>
  </>
)

const InsertTableDialog = () => (
  <Dialog role="dialog" aria-label="插入表格">
    <DialogTitle>
      <Icon name="dlg" size={12} />
      <h1>插入表格</h1>
      <button aria-label="关闭"><Icon name="close" size={11} color="#888" /></button>
    </DialogTitle>
    <DialogBody>
      <DialogColumn>
        <Group $pad="2px 6px">
          <Legend>表格样式</Legend>
          <Inline>
            <Select label="表格样式" width={84} value="建筑设计" />
            <SquareButton aria-label="表格样式对话框"><Icon name="tablestyle" /></SquareButton>
          </Inline>
        </Group>
        <SourceGroup $pad="2px 6px 1px">
          <Legend>插入选项</Legend>
          <DialogColumn $gap={5}>
            <Choice><Radio type="radio" name="source" defaultChecked />从空表格开始(S)</Choice>
            <Choice><Radio type="radio" name="source" />自数据链接(L)</Choice>
          </DialogColumn>
          <Inline $indent={9}>
            <Select label="数据链接" width={105} value="找不到数据链接" off />
            <SquareButton disabled aria-label="数据链接管理器"><Icon name="datalink" /></SquareButton>
          </Inline>
          <Choice><Radio type="radio" name="source" />自图形中的对象数据 (数据提取)(X)</Choice>
        </SourceGroup>
        <Group $pad="1px 7px 6px 6px">
          <Legend><Choice><Check type="checkbox" defaultChecked />预览(P)</Choice></Legend>
          <Preview>
            <PreviewTable>
              <tbody>
                {[...Array(10)].map((_, r) => (
                  <tr key={r}>
                    {[0, 1, 2].map((c) => <td key={c}><span>数</span><span>据</span></td>)}
                  </tr>
                ))}
              </tbody>
            </PreviewTable>
          </Preview>
        </Group>
      </DialogColumn>
      <DialogColumn $gap={4}>
        <Group $pad="0 6px" $gap={2}>
          <Legend>插入方式</Legend>
          <Choice><Radio type="radio" name="mode" defaultChecked />指定插入点(I)</Choice>
          <Choice><Radio type="radio" name="mode" />指定窗口(W)</Choice>
        </Group>
        <Group $pad="1px 6px 4px">
          <Legend>列和行设置</Legend>
          <SizeGrid>
            <i /><label htmlFor="cols">列数(C):</label><label htmlFor="colw">列宽(D):</label>
            <Icon name="cols" size={13} />
            <Spinner id="cols" value="5" />
            <Spinner id="colw" value="63.5" />
          </SizeGrid>
          <Rule />
          <SizeGrid>
            <i /><label htmlFor="rows">数据行数(R):</label><label htmlFor="rowh">行高(G):</label>
            <Icon name="rows" size={13} />
            <Spinner id="rows" value="5" />
            <Spinner id="rowh" value="1" unit="行" />
          </SizeGrid>
        </Group>
        <Group $pad="1px 6px 3px" $gap={3}>
          <Legend>设置单元样式</Legend>
          {cellStyles.map((label, i) => (
            <StyleRow key={label}>
              <label htmlFor={`cell${i}`}>{label}</label>
              <Select id={`cell${i}`} width={68} value="数据" />
            </StyleRow>
          ))}
        </Group>
      </DialogColumn>
    </DialogBody>
    <DialogFooter>
      <HelpLink>
        <Icon name="info" size={12} />
        <a href="#tables">了解表格</a>
      </HelpLink>
      <DialogButton $primary>确定</DialogButton>
      <DialogButton>取消</DialogButton>
      <DialogButton>帮助(H)</DialogButton>
    </DialogFooter>
  </Dialog>
)

const DrawingArea = () => (
  <Canvas>
    <GridSvg>
      <defs>
        <pattern id="minor" x="37.7" y="45.3" width="8.968" height="8.968" patternUnits="userSpaceOnUse">
          <path d="M.5 0v9M0 .5h9" stroke="#0e0f11" fill="none" />
        </pattern>
        <pattern id="major" x="37.7" y="45.3" width="44.84" height="44.84" patternUnits="userSpaceOnUse">
          <path d="M.5 0v45M0 .5h45" stroke="#222326" fill="none" />
        </pattern>
      </defs>
      <rect width="100%" height="100%" fill="url(#minor)" />
      <rect width="100%" height="100%" fill="url(#major)" />
    </GridSvg>
    <ViewLabel>[−] [俯视] [二维线框]</ViewLabel>
    <Ucs viewBox="0 0 60 60" fill="none" stroke="#ccc">
      <path d="M3.500 46.500h7v7h-7zM6.500 46V16M11 50.500h31" />
      <text x="7" y="13" fill="#bbb" stroke="none" fontSize="14" fontFamily="Liberation Sans">Y</text>
      <text x="46" y="50" fill="#bbb" stroke="none" fontSize="14" fontFamily="Liberation Sans">X</text>
    </Ucs>
    <Compass viewBox="0 0 74 78" fontFamily="Noto Sans CJK SC" textAnchor="middle">
      <circle cx="37" cy="38" r="29" fill="none" stroke="#363636" strokeWidth="7" />
      <path d="M23 24h28v28H23z" fill="#b4b6b6" />
      <text x="37" y="44" fontSize="17" fill="#59636a">上</text>
      <g fontSize="10" fill="#b8b8b8">
        <text x="37" y="13">北</text>
        <text x="7" y="42">西</text>
        <text x="67" y="42">东</text>
        <text x="37" y="73">南</text>
      </g>
    </Compass>
    <WcsButton>WCS</WcsButton>
    <NavBar>
      <Icon name="wheel" size={17} color="#2c2c2c" />
      <Icon name="handdark" size={17} color="#2c2c2c" />
      <Icon name="close" size={15} color="#2c2c2c" />
      <Icon name="move" size={17} color="#2c2c2c" />
      <Icon name="film" size={16} color="#2c2c2c" />
    </NavBar>
    <Blob $r={109} />
    <Blob $r={93} />
    <InsertTableDialog />
  </Canvas>
)

const App = () => {
  return (
    <Window>
      <GlobalStyle />
      <TitleArea />
      <Toolbars />
      <Workspace>
        <SideBar $w={22} $pad={1}><SideTools items={drawTools} /></SideBar>
        <DrawingColumn>
          <DrawingRow>
            <DrawingArea />
            <VScroll>
              <Icon name="up" size={8} />
              <VThumb />
              <Icon name="down" size={8} />
            </VScroll>
          </DrawingRow>
          <LayoutBar>
            {['|◀', '◀', '▶', '▶|'].map((t) => <LayoutNav key={t}>{t}</LayoutNav>)}
            <LayoutTab $active>模型</LayoutTab>
            <LayoutTab>布局1</LayoutTab>
            <Slash />
            <LayoutTab>布局2</LayoutTab>
            <Slash />
            <HScroll>
              <Icon name="left" size={8} />
              <HThumb />
              <Icon name="right" size={8} />
            </HScroll>
          </LayoutBar>
        </DrawingColumn>
        <SideBar $w={24} $pad={4}>
          <SideTools items={modifyTools} />
          <SideTools items={orderTools} />
        </SideBar>
      </Workspace>
      <CommandArea>
        <CommandGrip />
        <CommandBody>
          <p>命令:</p>
          <p>命令:</p>
          <CommandLine>
            <label htmlFor="command">命令:</label>
            <input id="command" defaultValue="_table" />
          </CommandLine>
        </CommandBody>
      </CommandArea>
      <StatusBar>
        <Coords>2033.3362,   2252.1981,  0.0000</Coords>
        {statusTools.map((name) => (
          <StatusButton key={name} aria-label={name} $on={statusOn.includes(name)}><Icon name={name} size={13} /></StatusButton>
        ))}
        <StatusRight>
          <span>模型</span>
          <StatusTools>
            <Icon name="globe" size={12} />
            <StatusButton aria-label="isolate"><Icon name="bulb" size={11} /></StatusButton>
            <Caret $color="#000" />
            <Icon name="window" size={12} />
          </StatusTools>
        </StatusRight>
      </StatusBar>
      <TaskBar>
        <StartButton aria-label="开始">
          <svg width="12" height="12" viewBox="0 0 12 12" fill="#fff"><path d="M0 2 5 1v4.700H0zM6 .800 12 0v5.700H6zM0 6.300h5V11l-5-.800zM6 6.300h6V12l-6-.900z" /></svg>
        </StartButton>
        <TaskSearch>
          <svg width="16" height="16" viewBox="0 0 16 16" fill="none" stroke="#222" strokeWidth="2"><circle cx="8" cy="8" r="6.500" /></svg>
          <input placeholder="在这里输入你要搜索的内容" />
          <svg width="12" height="14" viewBox="0 0 12 14" fill="none" stroke="#444"><rect x="4" y="1" width="4" height="8" rx="2" /><path d="M2 7c0 5 8 5 8 0M6 11v2" /></svg>
        </TaskSearch>
        <TaskApp $first aria-label="Edge">
          <svg width="16" height="16" viewBox="0 0 16 16" fill="none" stroke="#2287dd" strokeWidth="3"><path d="M1.500 7C3 0 14 .500 14 8H5M5 6.500c-2 7 4 8 8.500 5.500" /></svg>
        </TaskApp>
        <TaskApp aria-label="AutoCAD">
          <svg width="18" height="17" viewBox="0 0 18 17"><path d="M1 1h16v15H1z" fill="#9b9b9b" /><path d="m3 13 15-6v9H1z" fill="#ddd" /><path d="M1 13 6 1l7 10-5-1-3 4z" fill="#d4151c" /></svg>
        </TaskApp>
        <TaskApp aria-label="画图">
          <svg width="18" height="17" viewBox="0 0 18 17"><path d="M8 3c8-1 9 4 6 8s-12 6-13 1 2-8 7-9z" fill="#d7e4ee" /><circle cx="5" cy="8" r="1.500" fill="#d33" /><circle cx="8.500" cy="5.500" r="1.500" fill="#3a9a3a" /><circle cx="5.500" cy="12" r="1.500" fill="#2a6fd0" /><circle cx="10" cy="12" r="1.500" fill="#e5b323" /><path d="m9 9 7-8" stroke="#c88a3c" strokeWidth="2" /></svg>
        </TaskApp>
        <Tray>
          <Icon name="up" size={10} color="#eee" />
          <Icon name="print" size={11} color="#eee" />
          <Icon name="zoomrt" size={10} color="#aaa" />
          <Icon name="sheets" size={10} color="#aaa" />
          <span>中</span>
          <Icon name="window" size={12} color="#ddd" />
          <Clock>21:55<br />2019/1/1</Clock>
        </Tray>
      </TaskBar>
      <Pointer viewBox="0 0 280 245">
        <path d="M269.500 10 16 235M12 202l-1.500 33M8.500 231.500 69 226" />
      </Pointer>
      <Watermark>
        <svg width="34" height="36" viewBox="0 0 34 36" fill="none" stroke="#d9dae2" strokeWidth="2.600" strokeLinecap="round" strokeLinejoin="round">
          <path d="M2 7v21c0 5 4 7 8 5l19-10c4-3 4-7 0-10L14 3c-4-2-7 0-7 4v17c0 3 2 3 4 2" />
          <path d="m14 14 7 4-7 4z" fill="#d9dae2" strokeWidth="1" />
          <path d="M23 14v8" strokeWidth="1.800" />
        </svg>
        <div>
          <Brand>溜溜自学</Brand>
          <Site>zixue.3D66.COM</Site>
        </div>
      </Watermark>
    </Window>
  )
}

export default App
